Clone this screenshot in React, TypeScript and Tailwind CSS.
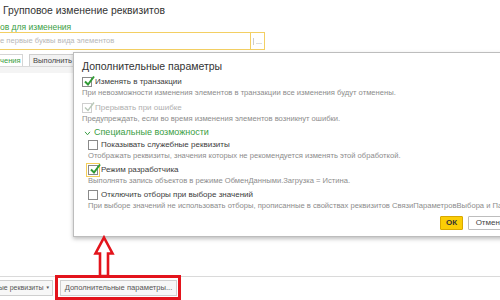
import React from "react";

function Check({ checked, disabled, focus }: { checked?: boolean; disabled?: boolean; focus?: boolean }) {
  return (
    <span
      className={
        "relative flex h-[10px] w-[10px] shrink-0 items-center justify-center border bg-white " +
        (disabled ? "border-[#cfcfcf] " : "border-[#8a8a8a] ") +
        (focus ? "outline outline-[1.5px] outline-[#f5cf5a] outline-offset-[1px]" : "")
      }
    >
      {checked && (
        <svg viewBox="0 0 12 12" className="absolute left-[0px] top-[-3px] h-[12px] w-[12px]">
          <path
            d="M2 6.5 L5 9.5 L11 1.5"
            fill="none"
            stroke={disabled ? "#b9c9b9" : "#2f9a34"}
            strokeWidth={disabled ? 1.4 : 2}
          />
        </svg>
      )}
    </span>
  );
}

function Option({
  label,
  desc,
  checked,
  disabled,
  focus,
}: {
  label: string;
  desc: string;
  checked?: boolean;
  disabled?: boolean;
  focus?: boolean;
}) {
  return (
    <div className="flex flex-col">
      <div className="flex h-[12px] items-center gap-[3px]">
        <Check checked={checked} disabled={disabled} focus={focus} />
        <span className={"text-[8px] " + (disabled ? "text-[#b0b0b0]" : "text-[#3c3c3c]")}>{label}</span>
      </div>
      <div className="h-[10px] whitespace-nowrap text-[7.6px] leading-[10px] text-[#8c8c8c]">{desc}</div>
    </div>
  );
}

export default function App() {
  return (
    <div className="relative flex h-[300px] w-[500px] flex-col overflow-hidden bg-white font-['Liberation_Sans',Arial,sans-serif]">
      {/* Page title */}
      <div className="pl-[3px] pt-[4px] text-[10.4px] leading-[14px] text-[#333]">Групповое изменение реквизитов</div>
      <div className="mt-[4px] text-[8.5px] leading-[11px] text-[#3a9e43]">ов для изменения</div>

      {/* Search input */}
      <div className="mt-[-1px] flex h-[18px] w-[265px]">
        <div className="flex flex-1 items-center border-y border-[#f3cf63] text-[7.6px] text-[#b8b8b8]">
          е первые буквы вида элементов
        </div>
        <div className="flex w-[15px] items-center justify-center border border-[#f3cf63] text-[7px] leading-none text-[#888]">
          <span className="border-l border-[#ccc] pl-[2px]">...</span>
        </div>
      </div>

      {/* Tabs */}
      <div className="mt-[4px] flex h-[12px] items-end">
        <div className="flex h-[12px] w-[23px] items-center border-r border-t border-[#d5d5d5] bg-white text-[7.6px] text-[#3a9e43]">чения</div>
        <div className="ml-[6px] flex h-[12px] w-[60px] items-center border-x border-t border-[#cfcfcf] bg-[#f2f2f2] pl-[3px] text-[7.6px] text-[#444]">
          Выполнить п
        </div>
      </div>
      <div className="h-[7px] border-t border-[#d9d9d9] bg-[#f4f4f4]" />

      <div className="flex-1" />

      {/* Bottom bar */}
      <div className="flex h-[24px] items-start gap-[7px] border-t border-[#dadada] pt-[3px]">
        <div className="flex h-[16px] w-[53px] shrink-0 items-center justify-end gap-[2px] whitespace-nowrap border-y border-r border-[#cfcfcf] bg-[#f7f7f7] pr-[2px] text-[7px] text-[#555]">
          ые реквизиты <span className="text-[4.5px]">▼</span>
        </div>
        <div className="flex h-[16px] w-[117px] shrink-0 items-center justify-center whitespace-nowrap border border-[#cfcfcf] bg-[#f7f7f7] text-[7.6px] text-[#555]">
          Дополнительные параметры...
        </div>
      </div>

      {/* Dialog */}
      <div className="absolute left-[73px] top-[52px] flex h-[185px] w-[440px] flex-col border border-[#bdbdbd] bg-white pl-[8px] pt-[5px] shadow-[0_2px_4px_rgba(0,0,0,0.25)]">
        <div className="text-[10.5px] leading-[16px] text-[#333]">Дополнительные параметры</div>
        <div className="mt-[2px] flex flex-col gap-[4px]">
          <Option
            checked
            label="Изменять в транзакции"
            desc="При невозможности изменения элементов в транзакции все изменения будут отменены."
          />
          <Option
            checked
            disabled
            label="Прерывать при ошибке"
            desc="Предупреждать, если во время изменения элементов возникнут ошибки."
          />
        </div>
        <div className="ml-[2px] mt-[3px] flex h-[12px] items-center gap-[3px] text-[9px] text-[#3a9e43]">
          <svg viewBox="0 0 8 6" className="h-[5px] w-[7px]">
            <path d="M1 1 L4 4.5 L7 1" fill="none" stroke="#3a9e43" strokeWidth="1.2" />
          </svg>
          Специальные возможности
        </div>
        <div className="ml-[6px] flex flex-col gap-[3px]">
          <Option
            label="Показывать служебные реквизиты"
            desc="Отображать реквизиты, значения которых не рекомендуется изменять этой обработкой."
          />
          <Option
            checked
            focus
            label="Режим разработчика"
            desc="Выполнять запись объектов в режиме ОбменДанными.Загрузка = Истина."
          />
          <Option
            label="Отключить отборы при выборе значений"
            desc="При выборе значений не использовать отборы, прописанные в свойствах реквизитов СвязиПараметровВыбора и ПараметрыВыбора."
          />
        </div>
        <div className="mt-[5px] flex gap-[5px] pl-[358px]">
          <div className="flex h-[14px] w-[26px] items-center justify-center rounded-[1px] border border-[#d8a800] bg-[#fbcd06] text-[8px] font-bold text-[#333]">
            ОК
          </div>
          <div className="flex h-[14px] w-[50px] items-center justify-center rounded-[1px] border border-[#bdbdbd] bg-white text-[8px] text-[#444]">
            Отмена
          </div>
        </div>
      </div>

      {/* Annotation: arrow and highlight */}
      <svg className="pointer-events-none absolute left-[90px] top-[235px] h-[42px] w-[30px]" viewBox="0 0 30 42">
        <path d="M14 2.5 L22.5 18.5 L18 18.5 L18 41 L10 41 L10 18.5 L5.5 18.5 Z" fill="none" stroke="#e3141c" strokeWidth="2.6" strokeLinejoin="miter" />
      </svg>
      <div className="pointer-events-none absolute left-[55px] top-[275px] h-[25px] w-[126px] border-[3px] border-[#e3141c]" />
    </div>
  );
}
